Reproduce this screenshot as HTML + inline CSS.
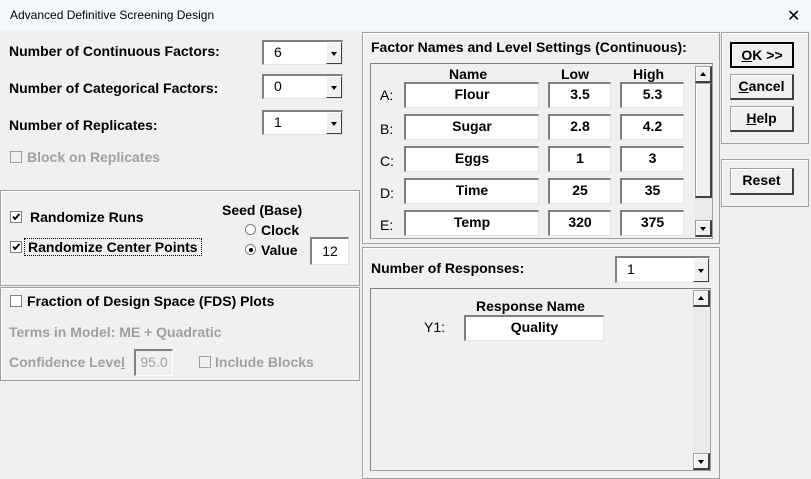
<!DOCTYPE html>
<html><head><style>
*{box-sizing:border-box;margin:0;padding:0}
body{width:811px;height:476px;background:#f0f0f0;font-family:"Liberation Sans",Arial,sans-serif;font-size:14px;font-weight:bold;color:#000;position:relative;overflow:hidden}
.a{position:absolute;white-space:nowrap}
.grp{position:absolute;border:1px solid #a0a0a0;box-shadow:inset 1px 1px 0 #fff}
.fld{position:absolute;background:#fff;border-top:2px solid #808080;border-left:2px solid #808080;border-right:1px solid #e3e3e3;border-bottom:1px solid #e3e3e3;text-align:center;line-height:21px}
.cmb{position:absolute;background:#fff;border-top:2px solid #808080;border-left:2px solid #808080;border-right:1px solid #e3e3e3;border-bottom:1px solid #e3e3e3;font-weight:normal;padding-left:10px;line-height:20px}
.cmb .ar{position:absolute;right:0;top:0;width:16px;bottom:0;background:#f0f0f0;border-left:1px solid #fff;border-top:1px solid #fff;border-right:1px solid #404040;border-bottom:1px solid #404040}
.tri{position:absolute;left:4px;width:0;height:0;border-left:3.5px solid transparent;border-right:3.5px solid transparent}
.btn{position:absolute;background:#f0f0f0;border:1px solid #a0a0a0;border-right:2px solid #404040;border-bottom:2px solid #404040;box-shadow:inset 1px 1px 0 #fff;text-align:center;line-height:23px}
.dis{color:#a0a0a0}
.cb{position:absolute;width:12px;height:12px;border:1px solid #808080;background:#fff}
.rad{position:absolute;width:11px;height:11px;border-radius:50%;border:1px solid #808080;background:#fff}
</style></head><body>
<div class="a" style="left:0;top:0;width:811px;height:31px;background:#f3f8fa"></div>
<div class="a" style="left:10px;top:8px;font-weight:normal;font-size:12px">Advanced Definitive Screening Design</div>
<div class="a" style="left:787px;top:6px;font-weight:normal;font-size:16px">✕</div>

<div class="a" style="left:9px;top:43px">Number of Continuous Factors:</div>
<div class="a" style="left:9px;top:80px">Number of Categorical Factors:</div>
<div class="a" style="left:9px;top:117px">Number of Replicates:</div>
<div class="cmb" style="left:262px;top:40px;width:81px;height:25px">6<div class="ar"><div class="tri" style="top:9px;border-top:4px solid #000"></div></div></div>
<div class="cmb" style="left:262px;top:74px;width:81px;height:25px">0<div class="ar"><div class="tri" style="top:9px;border-top:4px solid #000"></div></div></div>
<div class="cmb" style="left:262px;top:110px;width:81px;height:25px">1<div class="ar"><div class="tri" style="top:9px;border-top:4px solid #000"></div></div></div>
<div class="cb" style="left:10px;top:151px;border-color:#a0a0a0;background:#f0f0f0"></div>
<div class="a dis" style="left:27px;top:149px">Block on Replicates</div>

<div class="grp" style="left:0;top:190px;width:360px;height:96px"></div>
<div class="cb" style="left:10px;top:211px"></div>
<svg class="a" style="left:10px;top:211px" width="12" height="12"><path d="M3 5.5 L5 8 L9.5 3" stroke="#000" stroke-width="1.8" fill="none"/></svg>
<div class="a" style="left:30px;top:209px">Randomize Runs</div>
<div class="cb" style="left:10px;top:241px"></div>
<svg class="a" style="left:10px;top:241px" width="12" height="12"><path d="M3 5.5 L5 8 L9.5 3" stroke="#000" stroke-width="1.8" fill="none"/></svg>
<div class="a" style="left:25px;top:239px;padding:0 3px;outline:1px dotted #000">Randomize Center Points</div>
<div class="a" style="left:222px;top:202px">Seed (Base)</div>
<div class="rad" style="left:245px;top:224px"></div>
<div class="a" style="left:261px;top:222px">Clock</div>
<div class="rad" style="left:245px;top:244px"></div>
<div class="a" style="left:249px;top:248px;width:4px;height:4px;border-radius:50%;background:#000"></div>
<div class="a" style="left:261px;top:242px">Value</div>
<div class="fld" style="left:310px;top:237px;width:39px;height:28px;font-weight:normal;line-height:25px">12</div>

<div class="grp" style="left:0;top:287px;width:360px;height:94px"></div>
<div class="cb" style="left:10px;top:295px"></div>
<div class="a" style="left:27px;top:293px">Fraction of Design Space (FDS) Plots</div>
<div class="a dis" style="left:9px;top:324px">Terms in Model: ME + Quadratic</div>
<div class="a dis" style="left:9px;top:354px">Confidence Leve<u>l</u></div>
<div class="fld dis" style="left:134px;top:349px;width:39px;height:27px;background:#f0f0f0;font-weight:normal;border-right:1px solid #fff;border-bottom:1px solid #fff;line-height:23px">95.0</div>
<div class="cb" style="left:199px;top:356px;border-color:#a0a0a0;background:#f0f0f0"></div>
<div class="a dis" style="left:215px;top:354px">Include Blocks</div>

<div class="grp" style="left:362px;top:32px;width:358px;height:212px"></div>
<div class="a" style="left:371px;top:39px">Factor Names and Level Settings (Continuous):</div>
<div class="a" style="left:370px;top:63px;width:343px;height:176px;border:1px solid #a0a0a0;border-top-color:#808080;border-left-color:#808080"></div>
<div class="a" style="left:449px;top:66px">Name</div>
<div class="a" style="left:561px;top:66px">Low</div>
<div class="a" style="left:633px;top:66px">High</div>
<div class="a" style="left:695px;top:66px;width:17px;height:171px;background:#eaeaea"></div>
<div class="btn" style="left:695px;top:66px;width:17px;height:17px"><div class="tri" style="top:5px;border-bottom:4px solid #000"></div></div>
<div class="btn" style="left:695px;top:83px;width:17px;height:115px"></div>
<div class="btn" style="left:695px;top:220px;width:17px;height:17px"><div class="tri" style="top:6px;border-top:4px solid #000"></div></div>

<div class="a" style="left:380px;top:87px;font-weight:normal">A:</div>
<div class="fld" style="left:404px;top:82px;width:135px;height:26px">Flour</div>
<div class="fld" style="left:548px;top:82px;width:63px;height:26px">3.5</div>
<div class="fld" style="left:620px;top:82px;width:64px;height:26px">5.3</div>
<div class="a" style="left:380px;top:121px;font-weight:normal">B:</div>
<div class="fld" style="left:404px;top:114px;width:135px;height:26px">Sugar</div>
<div class="fld" style="left:548px;top:114px;width:63px;height:26px">2.8</div>
<div class="fld" style="left:620px;top:114px;width:64px;height:26px">4.2</div>
<div class="a" style="left:380px;top:153px;font-weight:normal">C:</div>
<div class="fld" style="left:404px;top:146px;width:135px;height:26px">Eggs</div>
<div class="fld" style="left:548px;top:146px;width:63px;height:26px">1</div>
<div class="fld" style="left:620px;top:146px;width:64px;height:26px">3</div>
<div class="a" style="left:380px;top:185px;font-weight:normal">D:</div>
<div class="fld" style="left:404px;top:178px;width:135px;height:26px">Time</div>
<div class="fld" style="left:548px;top:178px;width:63px;height:26px">25</div>
<div class="fld" style="left:620px;top:178px;width:64px;height:26px">35</div>
<div class="a" style="left:380px;top:217px;font-weight:normal">E:</div>
<div class="fld" style="left:404px;top:210px;width:135px;height:26px">Temp</div>
<div class="fld" style="left:548px;top:210px;width:63px;height:26px">320</div>
<div class="fld" style="left:620px;top:210px;width:64px;height:26px">375</div>

<div class="grp" style="left:362px;top:247px;width:358px;height:232px"></div>
<div class="a" style="left:371px;top:260px">Number of Responses:</div>
<div class="cmb" style="left:615px;top:256px;width:95px;height:27px;line-height:22px">1<div class="ar"><div class="tri" style="top:10px;border-top:4px solid #000"></div></div></div>
<div class="a" style="left:370px;top:288px;width:341px;height:183px;border:1px solid #a0a0a0;border-top-color:#808080;border-left-color:#808080"></div>
<div class="a" style="left:693px;top:290px;width:17px;height:180px;background:#eaeaea"></div>
<div class="btn" style="left:693px;top:290px;width:17px;height:17px"><div class="tri" style="top:5px;border-bottom:4px solid #000"></div></div>
<div class="btn" style="left:693px;top:453px;width:17px;height:17px"><div class="tri" style="top:6px;border-top:4px solid #000"></div></div>
<div class="a" style="left:476px;top:298px">Response Name</div>
<div class="a" style="left:424px;top:319px;font-weight:normal">Y1:</div>
<div class="fld" style="left:464px;top:315px;width:140px;height:26px">Quality</div>

<div class="grp" style="left:721px;top:32px;width:88px;height:112px"></div>
<div class="btn" style="left:730px;top:42px;width:64px;height:26px;border:2px solid #000;border-right-color:#000;border-bottom-color:#000;line-height:22px"><u>O</u>K &gt;&gt;</div>
<div class="btn" style="left:730px;top:74px;width:64px;height:26px"><u>C</u>ancel</div>
<div class="btn" style="left:730px;top:106px;width:64px;height:26px"><u>H</u>elp</div>
<div class="grp" style="left:721px;top:159px;width:88px;height:48px"></div>
<div class="btn" style="left:730px;top:168px;width:64px;height:27px">Reset</div>
</body></html>
